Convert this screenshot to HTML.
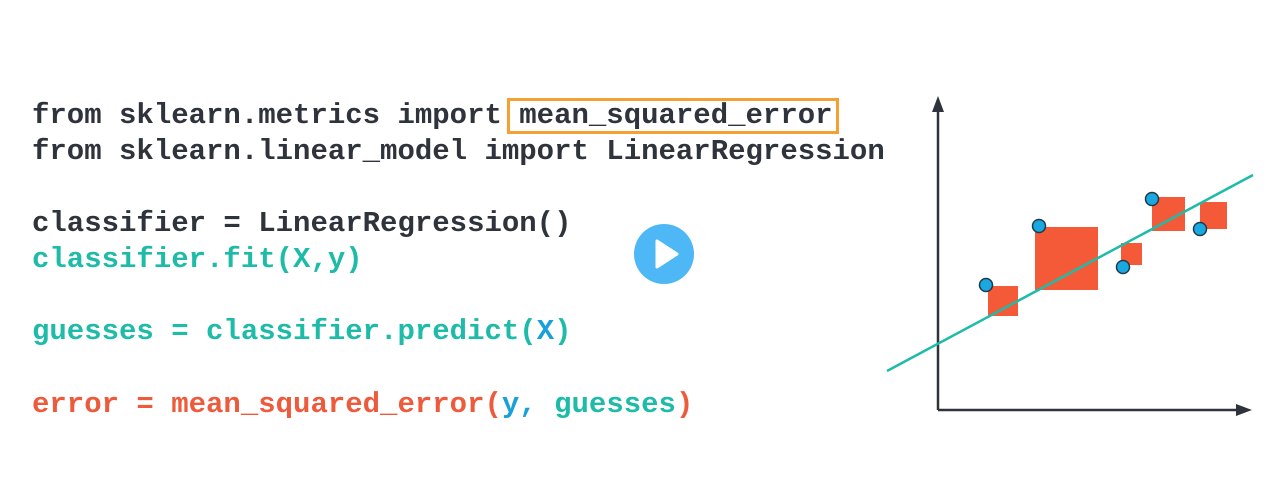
<!DOCTYPE html>
<html><head><style>
html,body{margin:0;padding:0;background:#fff;width:1287px;height:502px;overflow:hidden;position:relative}
.code{position:absolute;left:32px;font-family:"Liberation Mono",monospace;font-weight:bold;font-size:29px;white-space:pre;line-height:36px;color:#2e333c}
.t{color:#1dbba8}.o{color:#ee5a3c}.b{color:#1aa0d8}
</style></head><body>
<div class="code" style="top:98px">from sklearn.metrics import mean_squared_error</div>
<div class="code" style="top:134px">from sklearn.linear_model import LinearRegression</div>
<div class="code" style="top:206px">classifier = LinearRegression()</div>
<div class="code t" style="top:242px">classifier.fit(X,y)</div>
<div class="code t" style="top:314px">guesses = classifier.predict(<span class="b">X</span>)</div>
<div class="code o" style="top:387px">error = mean_squared_error(<span class="b">y, </span><span class="t">guesses</span>)</div>
<div style="position:absolute;left:507px;top:98px;width:326px;height:30px;border:3px solid #f4a032"></div>
<svg width="1287" height="502" style="position:absolute;left:0;top:0">
<circle cx="664" cy="254" r="30" fill="#4db8f5"/>
<path d="M657 241 L657 267 L677 254 Z" fill="#fff" stroke="#fff" stroke-width="3" stroke-linejoin="round"/>
<rect x="988" y="286" width="30" height="30" fill="#f55a38"/>
<rect x="1035" y="227" width="63" height="63" fill="#f55a38"/>
<rect x="1121" y="243" width="21" height="22" fill="#f55a38"/>
<rect x="1152" y="197" width="33" height="34" fill="#f55a38"/>
<rect x="1200" y="202" width="27" height="27" fill="#f55a38"/>
<path d="M938 410 V108 M938 410 H1240" stroke="#2e333c" stroke-width="2.5" fill="none"/>
<path d="M932 112 L938 96 L944 112 Z" fill="#2e333c"/>
<path d="M1236 404 L1252 410 L1236 416 Z" fill="#2e333c"/>
<line x1="887" y1="371" x2="1253" y2="175" stroke="#1dbba8" stroke-width="2.5"/>
<g fill="#1aa8e0" stroke="#1e3a4a" stroke-width="1.5">
<circle cx="986" cy="285" r="6.5"/><circle cx="1039" cy="226" r="6.5"/><circle cx="1123" cy="267" r="6.5"/><circle cx="1152" cy="199" r="6.5"/><circle cx="1200" cy="229" r="6.5"/>
</g>
</svg>
</body></html>
